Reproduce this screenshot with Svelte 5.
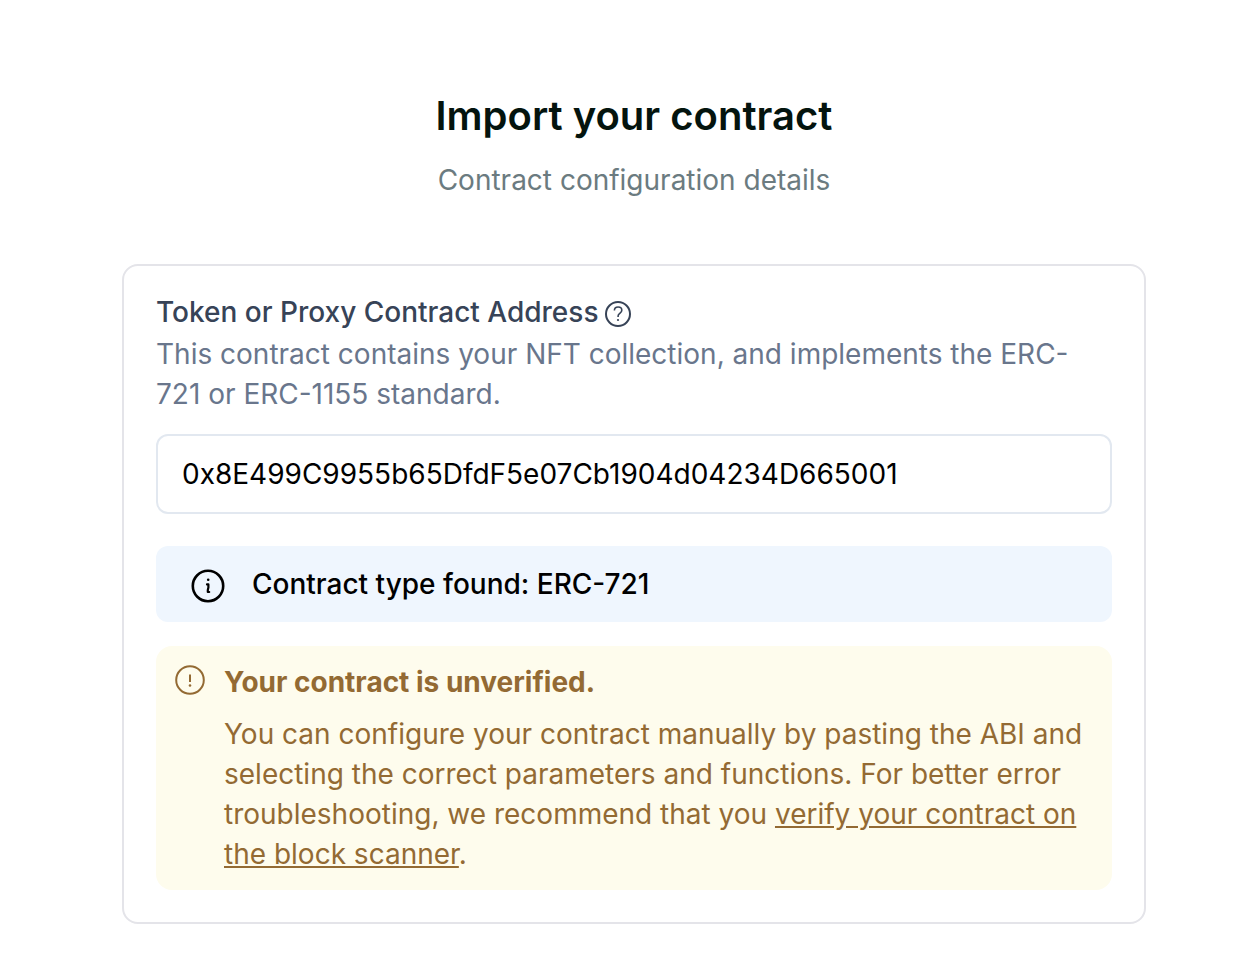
<script lang="ts">
	let address = $state("0x8E499C9955b65DfdF5e07Cb1904d04234D665001");
</script>

<main class="page">
	<header class="heading">
		<h1>Import your contract</h1>
		<p>Contract configuration details</p>
	</header>

	<section class="card">
		<div class="labelRow">
			<label for="address">Token or Proxy Contract Address</label>
			<button class="help" type="button" aria-label="Help">
				<svg viewBox="0 0 28 28" width="28" height="28" fill="none" stroke="currentColor">
					<circle cx="14" cy="14" r="12" stroke-width="2" />
					<path
						d="M10.4 10.6C10.4 8.4 11.9 7 14.1 7c2.2 0 3.7 1.3 3.7 3.2 0 1.7-.9 2.4-2 3.2-1.2.9-1.7 1.5-1.7 2.7v.9"
						stroke-width="1.6"
					/>
					<circle cx="14" cy="20" r="1.1" fill="currentColor" stroke="none" />
				</svg>
			</button>
		</div>
		<p class="hint" id="addressHint">
			This contract contains your NFT collection, and implements the ERC-721 or ERC-1155
			standard.
		</p>
		<input
			id="address"
			type="text"
			spellcheck="false"
			aria-describedby="addressHint"
			bind:value={address}
		/>

		<div class="info" role="status">
			<svg viewBox="0 0 36 36" width="36" height="36" fill="none" stroke="currentColor">
				<circle cx="18" cy="18" r="15.2" stroke-width="2.6" />
				<circle cx="18.2" cy="11.7" r="1.3" fill="currentColor" stroke="none" />
				<path
					d="M17 16.4h1.4v3.2L17.8 22v2h1.4"
					stroke-width="2.2"
					stroke-linecap="round"
					stroke-linejoin="round"
				/>
			</svg>
			<span>Contract type found: ERC-721</span>
		</div>

		<div class="warning" role="alert">
			<svg viewBox="0 0 32 32" width="32" height="32" fill="none" stroke="currentColor">
				<circle cx="16" cy="16" r="13.8" stroke-width="2" />
				<path d="M16 10.5v7.5" stroke-width="2" />
				<circle cx="16" cy="21.5" r="1.3" fill="currentColor" stroke="none" />
			</svg>
			<div class="warningText">
				<h2>Your contract is unverified.</h2>
				<p>
					You can configure your contract manually by pasting the ABI and selecting the
					correct parameters and functions. For better error troubleshooting, we recommend
					that you <a href="#verify">verify your contract on the block scanner</a>.
				</p>
			</div>
		</div>
	</section>
</main>

<style>
	:global(body) {
		margin: 0;
		background: #fff;
	}

	.page {
		box-sizing: border-box;
		max-width: 1208px;
		margin-left: auto;
		padding: 88px 92px 38px;
		font-family: Inter, sans-serif;
		font-size: 28px;
		line-height: 40px;
	}

	h1,
	h2,
	p {
		margin: 0;
	}

	svg {
		display: block;
		flex-shrink: 0;
	}

	.heading {
		text-align: center;
		margin-bottom: 64px;
	}

	.heading h1 {
		font-size: 40px;
		line-height: 56px;
		font-weight: 600;
		color: #04140e;
	}

	.heading p {
		margin-top: 16px;
		color: #6b7b80;
	}

	.card {
		border: 2px solid #e4e4e9;
		border-radius: 16px;
		padding: 26px 32px 32px;
	}

	.labelRow {
		display: flex;
		align-items: center;
		gap: 6px;
	}

	label {
		font-weight: 500;
		color: #374357;
	}

	.help {
		margin-top: 4px;
		padding: 0;
		border: none;
		background: none;
		color: #374357;
	}

	.hint {
		margin-top: 2px;
		color: #69768c;
	}

	input {
		box-sizing: border-box;
		display: block;
		width: 100%;
		height: 80px;
		margin-top: 20px;
		padding: 0 24px;
		border: 2px solid #e2e8f0;
		border-radius: 12px;
		background: #fff;
		color: #000;
		font: inherit;
	}

	.info {
		display: flex;
		align-items: flex-end;
		gap: 26px;
		margin-top: 32px;
		padding: 18px 34px;
		border-radius: 12px;
		background: #eff6fe;
		color: #000;
		font-weight: 500;
	}

	.warning {
		display: flex;
		gap: 18px;
		margin-top: 24px;
		padding: 18px 18px 16px;
		border-radius: 16px;
		background: #fefced;
		color: #936a33;
	}

	.warning h2 {
		font-size: 28px;
		line-height: 36px;
		font-weight: 700;
	}

	.warning p {
		margin-top: 14px;
	}

	.warning a {
		color: inherit;
		text-decoration: underline;
	}
</style>
